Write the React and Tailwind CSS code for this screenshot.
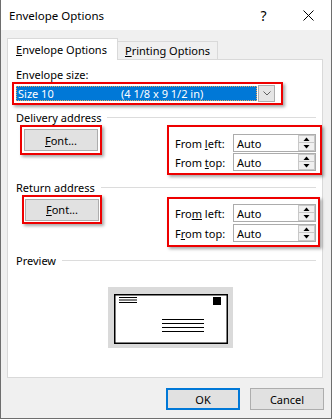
import React from "react";

function RedBox({ className = "", children }) {
  return (
    <div
      className={
        "border-2 border-[#ee0000] shadow-[2px_2px_3px_rgba(0,0,0,0.35)] " +
        className
      }
    >
      {children}
    </div>
  );
}

function Spin({ label }) {
  return (
    <div className="flex items-center h-[18px]">
      <div className="w-[58px]">{label}</div>
      <div className="w-[83px] h-[18px] border border-[#acacac] bg-white flex items-center">
        <span className="pl-[3px] flex-1">Auto</span>
        <div className="w-[17px] h-[16px] flex flex-col mr-[0px]">
          <div className="h-[8px] border border-[#c8c8c8] bg-[#f0f0f0] flex items-center justify-center">
            <svg width="7" height="4" viewBox="0 0 7 4">
              <path d="M0.5 4 L3.5 0.5 L6.5 4 Z" fill="#000" />
            </svg>
          </div>
          <div className="h-[8px] border border-t-0 border-[#c8c8c8] bg-[#f0f0f0] flex items-center justify-center">
            <svg width="7" height="4" viewBox="0 0 7 4">
              <path d="M0.5 0 L3.5 3.5 L6.5 0 Z" fill="#000" />
            </svg>
          </div>
        </div>
      </div>
    </div>
  );
}

function GroupHeader({ children, className = "" }) {
  return (
    <div className={"h-[16px] flex items-center pl-[8px] pr-[6px] " + className}>
      <span>{children}</span>
      <div className="flex-1 h-px bg-[#dcdcdc] ml-[6px]" />
    </div>
  );
}

function FontButton() {
  return (
    <div className="w-[74px] h-[22px] border border-[#adadad] bg-[#e1e1e1] flex items-center justify-center">
      <span>
        <span className="underline">F</span>ont...
      </span>
    </div>
  );
}

export default function App() {
  return (
    <div className="w-[332px] h-[419px] bg-[#f0f0f0] border-x border-b border-[#6e6e6e] flex flex-col text-[11px] leading-[15px] text-black font-['Noto_Sans',sans-serif]">
      {/* Title bar */}
      <div className="h-[30px] bg-white flex items-center shrink-0">
        <span className="pl-[8px] text-[11.5px]">Envelope Options</span>
        <div className="ml-auto w-[45px] h-full flex items-center justify-center text-[14px]">
          ?
        </div>
        <div className="w-[45px] h-full flex items-center justify-center">
          <svg width="11" height="11" viewBox="0 0 11 11">
            <path d="M0.5 0.5 L10.5 10.5 M10.5 0.5 L0.5 10.5" stroke="#000" strokeWidth="1" />
          </svg>
        </div>
      </div>

      {/* Body */}
      <div className="pl-[6px] flex flex-col">
        {/* Tabs */}
        <div className="mt-[8px] h-[22px] flex items-end -mb-px relative z-10">
          <div className="w-[111px] h-[22px] bg-white border border-b-0 border-[#d9d9d9] flex items-center pl-[8px]">
            <span>
              <span className="underline">E</span>nvelope Options
            </span>
          </div>
          <div className="w-[100px] h-[18px] mb-px border-t border-r border-[#d9d9d9] bg-[#f0f0f0] flex items-center pl-[7px]">
            <span>
              <span className="underline">P</span>rinting Options
            </span>
          </div>
        </div>

        {/* Panel */}
        <div className="w-[316px] h-[319px] bg-white border border-[#d9d9d9] flex flex-col">
          <div className="h-[15px] mt-[7px] pl-[8px]">Envelope size:</div>

          <RedBox className="ml-[4px] w-[271px] h-[23px] flex items-center pl-[2px] bg-white">
            <div className="w-[241px] h-[15px] bg-[#0078d7] border border-dotted border-[#e6a45a] text-white flex items-center">
              <span className="w-[104px] pl-[1px]">Size 10</span>
              <span>(4 1/8 x 9 1/2 in)</span>
            </div>
            <div className="w-[17px] h-[17px] ml-[1px] bg-[#e5e5e5] border border-[#adadad] flex items-center justify-center">
              <svg width="8" height="5" viewBox="0 0 8 5">
                <path d="M0.5 0.5 L4 4 L7.5 0.5" stroke="#606060" strokeWidth="1" fill="none" />
              </svg>
            </div>
          </RedBox>

          <GroupHeader className="mt-[4px]">Delivery address</GroupHeader>

          <div className="h-[50px] flex items-start">
            <RedBox className="ml-[12px] w-[82px] h-[30px] flex items-center justify-center">
              <FontButton />
            </RedBox>
            <RedBox className="ml-auto w-[155px] h-[50px] pl-[6px] pt-[7px] flex flex-col gap-[1px]">
              <Spin
                label={
                  <span>
                    From <span className="underline">l</span>eft:
                  </span>
                }
              />
              <Spin
                label={
                  <span>
                    From <span className="underline">t</span>op:
                  </span>
                }
              />
            </RedBox>
          </div>

          <GroupHeader className="mt-[4px]">Return address</GroupHeader>

          <div className="h-[52px] flex items-start">
            <RedBox className="ml-[14px] w-[80px] h-[29px] flex items-center justify-center">
              <FontButton />
            </RedBox>
            <RedBox className="ml-auto mr-[2px] mt-[2px] w-[153px] h-[50px] pl-[6px] pt-[5px] flex flex-col gap-[2px]">
              <Spin
                label={
                  <span>
                    Fro<span className="underline">m</span> left:
                  </span>
                }
              />
              <Spin
                label={
                  <span>
                    F<span className="underline">r</span>om top:
                  </span>
                }
              />
            </RedBox>
          </div>

          <GroupHeader className="mt-[5px]">Preview</GroupHeader>

          <div className="mt-[19px] ml-[100px]">
            <svg width="125" height="61" viewBox="0 0 125 61">
              <rect x="0" y="0" width="125" height="61" fill="#dadada" />
              <rect x="6.75" y="7.75" width="112.5" height="48.5" fill="#fff" stroke="#000" strokeWidth="1.5" />
              <path d="M11 10.5 H29 M11 13 H29 M11 15.5 H29" stroke="#000" strokeWidth="1" />
              <rect x="105" y="10" width="8" height="8" fill="#000" />
              <path d="M54 32.5 H96 M54 36.5 H96 M54 40.5 H96 M54 44.5 H96" stroke="#000" strokeWidth="1" />
            </svg>
          </div>
        </div>

        {/* Buttons */}
        <div className="mt-[10px] flex justify-end gap-[10px] pr-[7px]">
          <div className="w-[74px] h-[22px] border-2 border-[#0078d7] bg-[#e1e1e1] flex items-center justify-center">
            OK
          </div>
          <div className="w-[74px] h-[22px] border border-[#adadad] bg-[#e1e1e1] flex items-center justify-center">
            Cancel
          </div>
        </div>
      </div>
    </div>
  );
}
